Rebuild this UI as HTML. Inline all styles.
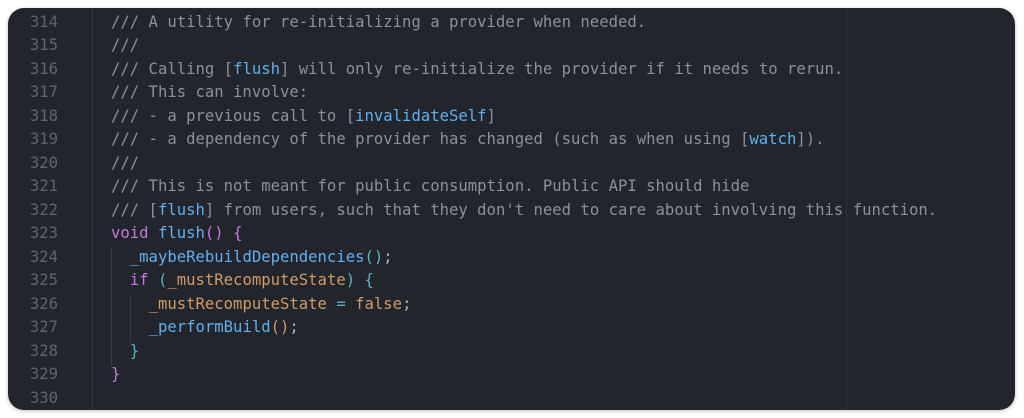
<!DOCTYPE html>
<html><head><style>
html,body{margin:0;padding:0;background:#fff;width:1024px;height:418px;overflow:hidden}
.p{position:absolute;left:8px;top:8px;width:1007px;height:402px;background:#22252c;border-radius:16px;box-shadow:0 1px 4px rgba(0,0,0,.25);overflow:hidden}
.g{position:absolute;left:84px;top:0;width:1px;height:402px;background:#32363e}
.r{position:absolute;left:838px;top:0;width:1px;height:402px;background:#2f333b}
.ig{position:absolute;width:1px;background:#3a3e46}
.q{position:absolute;left:0;top:1.5px;width:1007px;height:402px}
.l{position:absolute;left:0;height:23.5px;line-height:23.5px;font-family:"DejaVu Sans Mono","Liberation Mono",monospace;font-size:15.6px;white-space:pre;color:#8c9098}
.n{position:absolute;width:50px;text-align:right;color:#5f646d}
.c{position:absolute;left:103px}
.b{color:#61afef}.k{color:#c678dd}.o{color:#d19a66}.t{color:#56b6c2}.w{color:#abb2bf}
</style></head><body>
<div class="p">
<div class="g"></div><div class="r"></div>
<div class="ig" style="left:103px;top:240px;height:118px"></div>
<div class="ig" style="left:122px;top:287px;height:47px"></div>
<div class="q">
<div class="l" style="top:1px"><span class="n">314</span><span class="c">/// A utility for re-initializing a provider when needed.</span></div>
<div class="l" style="top:24.5px"><span class="n">315</span><span class="c">///</span></div>
<div class="l" style="top:48px"><span class="n">316</span><span class="c">/// Calling [<span class="b">flush</span>] will only re-initialize the provider if it needs to rerun.</span></div>
<div class="l" style="top:71.5px"><span class="n">317</span><span class="c">/// This can involve:</span></div>
<div class="l" style="top:95px"><span class="n">318</span><span class="c">/// - a previous call to [<span class="b">invalidateSelf</span>]</span></div>
<div class="l" style="top:118.5px"><span class="n">319</span><span class="c">/// - a dependency of the provider has changed (such as when using [<span class="b">watch</span>]).</span></div>
<div class="l" style="top:142px"><span class="n">320</span><span class="c">///</span></div>
<div class="l" style="top:165.5px"><span class="n">321</span><span class="c">/// This is not meant for public consumption. Public API should hide</span></div>
<div class="l" style="top:189px"><span class="n">322</span><span class="c">/// [<span class="b">flush</span>] from users, such that they don't need to care about involving this function.</span></div>
<div class="l" style="top:212.5px"><span class="n">323</span><span class="c"><span class="k">void</span> <span class="b">flush</span><span class="k">()</span> <span class="k">{</span></span></div>
<div class="l" style="top:236px"><span class="n">324</span><span class="c">  <span class="b">_maybeRebuildDependencies</span><span class="t">()</span><span class="w">;</span></span></div>
<div class="l" style="top:259.5px"><span class="n">325</span><span class="c">  <span class="k">if</span> <span class="t">(</span><span class="o">_mustRecomputeState</span><span class="t">)</span> <span class="t">{</span></span></div>
<div class="l" style="top:283px"><span class="n">326</span><span class="c">    <span class="o">_mustRecomputeState</span> <span class="t">=</span> <span class="o">false</span><span class="w">;</span></span></div>
<div class="l" style="top:306.5px"><span class="n">327</span><span class="c">    <span class="b">_performBuild</span><span class="o">()</span><span class="w">;</span></span></div>
<div class="l" style="top:330px"><span class="n">328</span><span class="c">  <span class="t">}</span></span></div>
<div class="l" style="top:353.5px"><span class="n">329</span><span class="c"><span class="k">}</span></span></div>
<div class="l" style="top:377px"><span class="n">330</span><span class="c"></span></div>
</div>
</div>
</body></html>
